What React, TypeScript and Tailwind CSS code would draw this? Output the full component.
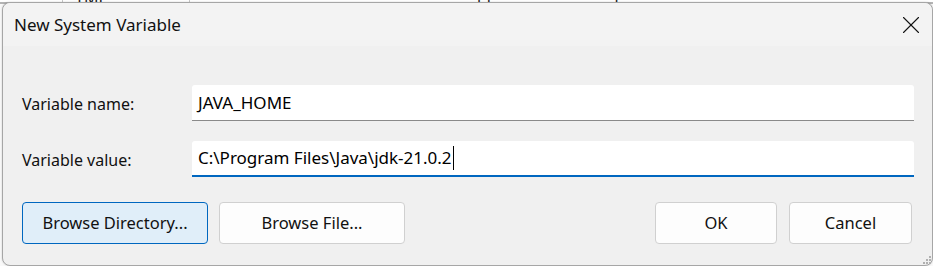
import { X } from "lucide-react";

const font = { fontFamily: '"Segoe UI", "Noto Sans", sans-serif' };

function Field({ label, value, focused }: { label: string; value: string; focused?: boolean }) {
  return (
    <div className="flex items-center">
      <div className="w-[189px] pl-[19px] pt-[2px] text-[16px] text-[#111]">{label}</div>
      <div
        className={
          "flex h-[36px] flex-1 items-center rounded-t-[3px] bg-white px-[6px] text-[17px] text-black " +
          (focused ? "border-b-2 border-[#0067c0]" : "border-b border-[#8a8a8a]")
        }
      >
        <span>{value}</span>
        {focused && <span className="ml-px h-[24px] w-px bg-black" />}
      </div>
    </div>
  );
}

function Btn({ children, primary, className }: { children: string; primary?: boolean; className: string }) {
  return (
    <button
      className={
        "h-[42px] rounded-[4px] border text-[16.5px] text-[#111] " +
        (primary ? "border-[#0067c0] bg-[#e0eef9]" : "border-[#d0d0d0] bg-[#fdfdfd]") +
        " " +
        className
      }
    >
      {children}
    </button>
  );
}

export default function App() {
  return (
    <div className="relative h-[266px] w-[933px] overflow-hidden bg-[#f9f9f9]" style={font}>
      {/* window behind the dialog */}
      <div className="absolute left-0 top-[-14px] flex h-[18px] w-[933px] items-center border-b-2 border-[#b4b4b4] bg-white text-[16px] text-[#1a1a1a]">
        <div className="h-full w-[63px] border-r border-[#c8c8c8]" />
        <div className="h-full w-[127px] border-r border-[#c8c8c8] pl-[12px]">TMP</div>
        <div className="pl-[125px]">C:\Users\Ahal Gaad\AppData\Local\Temp</div>
      </div>

      {/* dialog */}
      <div className="absolute left-[2px] top-[2px] flex h-[264px] w-[931px] flex-col rounded-[8px] border border-[#a6a6a6] bg-[#f0f0f0] shadow-[0_0_2px_rgba(0,0,0,0.2)]">
        <div className="flex h-[43px] items-center justify-between rounded-t-[8px] bg-[#f3f3f3] pl-[11px] pr-[6px]">
          <span className="text-[17px] text-[#111]">New System Variable</span>
          <X className="h-[30px] w-[30px] text-[#111]" strokeWidth={0.85} />
        </div>

        <div className="flex flex-col gap-[20px] pr-[18px] pt-[39px]">
          <Field label="Variable name:" value="JAVA_HOME" />
          <Field label="Variable value:" value="C:\Program Files\Java\jdk-21.0.2" focused />
        </div>

        <div className="flex items-center pl-[19px] pr-[20px] pt-[25px]">
          <Btn primary className="w-[186px]">Browse Directory...</Btn>
          <Btn className="ml-[11px] w-[186px]">Browse File...</Btn>
          <Btn className="ml-auto w-[122px]">OK</Btn>
          <Btn className="ml-[12px] w-[123px]">Cancel</Btn>
        </div>

        {/* resize grip */}
        <div className="absolute bottom-[1px] right-[1px] grid grid-cols-3 gap-[1px]">
          <span />
          <span />
          <span className="h-[2px] w-[2px] bg-[#b0b0b0]" />
          <span />
          <span className="h-[2px] w-[2px] bg-[#b0b0b0]" />
          <span className="h-[2px] w-[2px] bg-[#b0b0b0]" />
          <span className="h-[2px] w-[2px] bg-[#b0b0b0]" />
          <span className="h-[2px] w-[2px] bg-[#b0b0b0]" />
          <span className="h-[2px] w-[2px] bg-[#b0b0b0]" />
        </div>
      </div>
    </div>
  );
}
